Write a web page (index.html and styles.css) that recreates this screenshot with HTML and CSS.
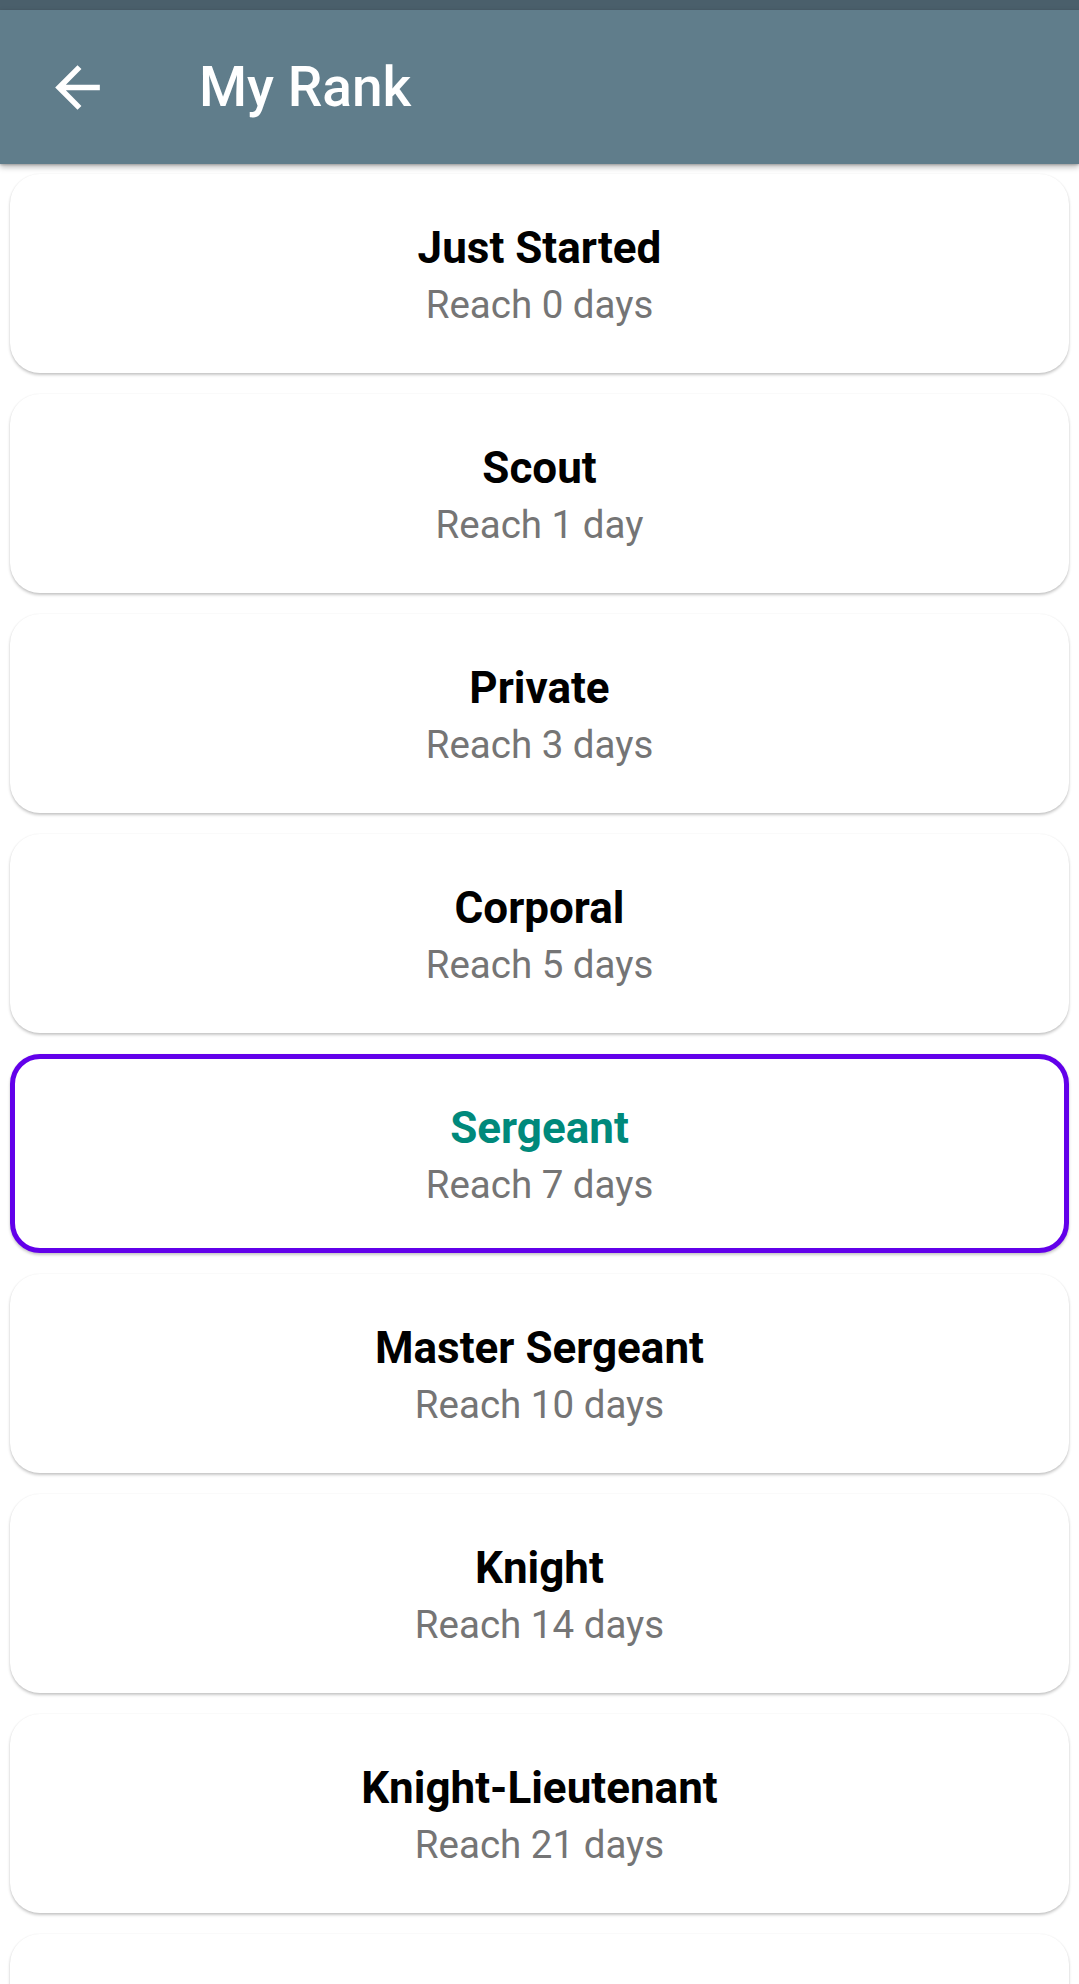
FILE: index.html
```html
<!DOCTYPE html>
<html lang="en">
<head>
<meta charset="utf-8">
<title>My Rank</title>
<link rel="stylesheet" href="styles.css">
</head>
<body>
<div class="status-bar"></div>
<header class="app-bar">
  <button class="back" aria-label="Back">
    <svg viewBox="0 0 24 24" width="67" height="67"><path fill="#fff" d="M20 11H7.83l5.59-5.59L12 4l-8 8 8 8 1.41-1.41L7.83 13H20v-2z"/></svg>
  </button>
  <h1 class="title">My Rank</h1>
</header>
<main class="list">
  <div class="card"><div class="rank">Just Started</div><div class="reach">Reach 0 days</div></div>
  <div class="card"><div class="rank">Scout</div><div class="reach">Reach 1 day</div></div>
  <div class="card"><div class="rank">Private</div><div class="reach">Reach 3 days</div></div>
  <div class="card"><div class="rank">Corporal</div><div class="reach">Reach 5 days</div></div>
  <div class="card current"><div class="rank">Sergeant</div><div class="reach">Reach 7 days</div></div>
  <div class="card"><div class="rank">Master Sergeant</div><div class="reach">Reach 10 days</div></div>
  <div class="card"><div class="rank">Knight</div><div class="reach">Reach 14 days</div></div>
  <div class="card"><div class="rank">Knight-Lieutenant</div><div class="reach">Reach 21 days</div></div>
  <div class="card"></div>
</main>
</body>
</html>
```
FILE: styles.css
```css
* { box-sizing: border-box; }
html, body {
  margin: 0;
  padding: 0;
  background: #ffffff;
  font-family: Roboto, "Noto Sans", "Liberation Sans", sans-serif;
  overflow: hidden;
}
.status-bar {
  height: 10px;
  background: #4a5f6b;
}
.app-bar {
  height: 154px;
  background: #607d8b;
  display: flex;
  align-items: center;
  box-shadow: 0 3px 6px rgba(0,0,0,0.28), 0 1px 2px rgba(0,0,0,0.2);
  position: relative;
  z-index: 2;
}
.back {
  border: 0;
  background: none;
  padding: 0;
  margin-left: 44px;
  width: 67px;
  height: 67px;
  display: flex;
}
.title {
  margin: 0 0 0 88px;
  color: #ffffff;
  font-size: 55px;
  font-weight: 500;
  line-height: 1;
}
.list {
  padding: 10px 10px 0;
  display: flex;
  flex-direction: column;
  gap: 21px;
}
.card {
  background: #ffffff;
  border-radius: 30px;
  padding: 48px 0 44px;
  display: flex;
  flex-direction: column;
  align-items: center;
  gap: 7px;
  box-shadow: 0 2px 3px rgba(0,0,0,0.22), 0 0 2px rgba(0,0,0,0.06);
  min-height: 199px;
}
.card.current {
  border: 5px solid #6200ea;
  padding: 43px 0 39px;
}
.rank {
  font-size: 44px;
  font-weight: 700;
  color: #000000;
  line-height: 53px;
}
.current .rank { color: #00897b; }
.reach {
  font-size: 38.5px;
  color: #757575;
  line-height: 46px;
}
```
